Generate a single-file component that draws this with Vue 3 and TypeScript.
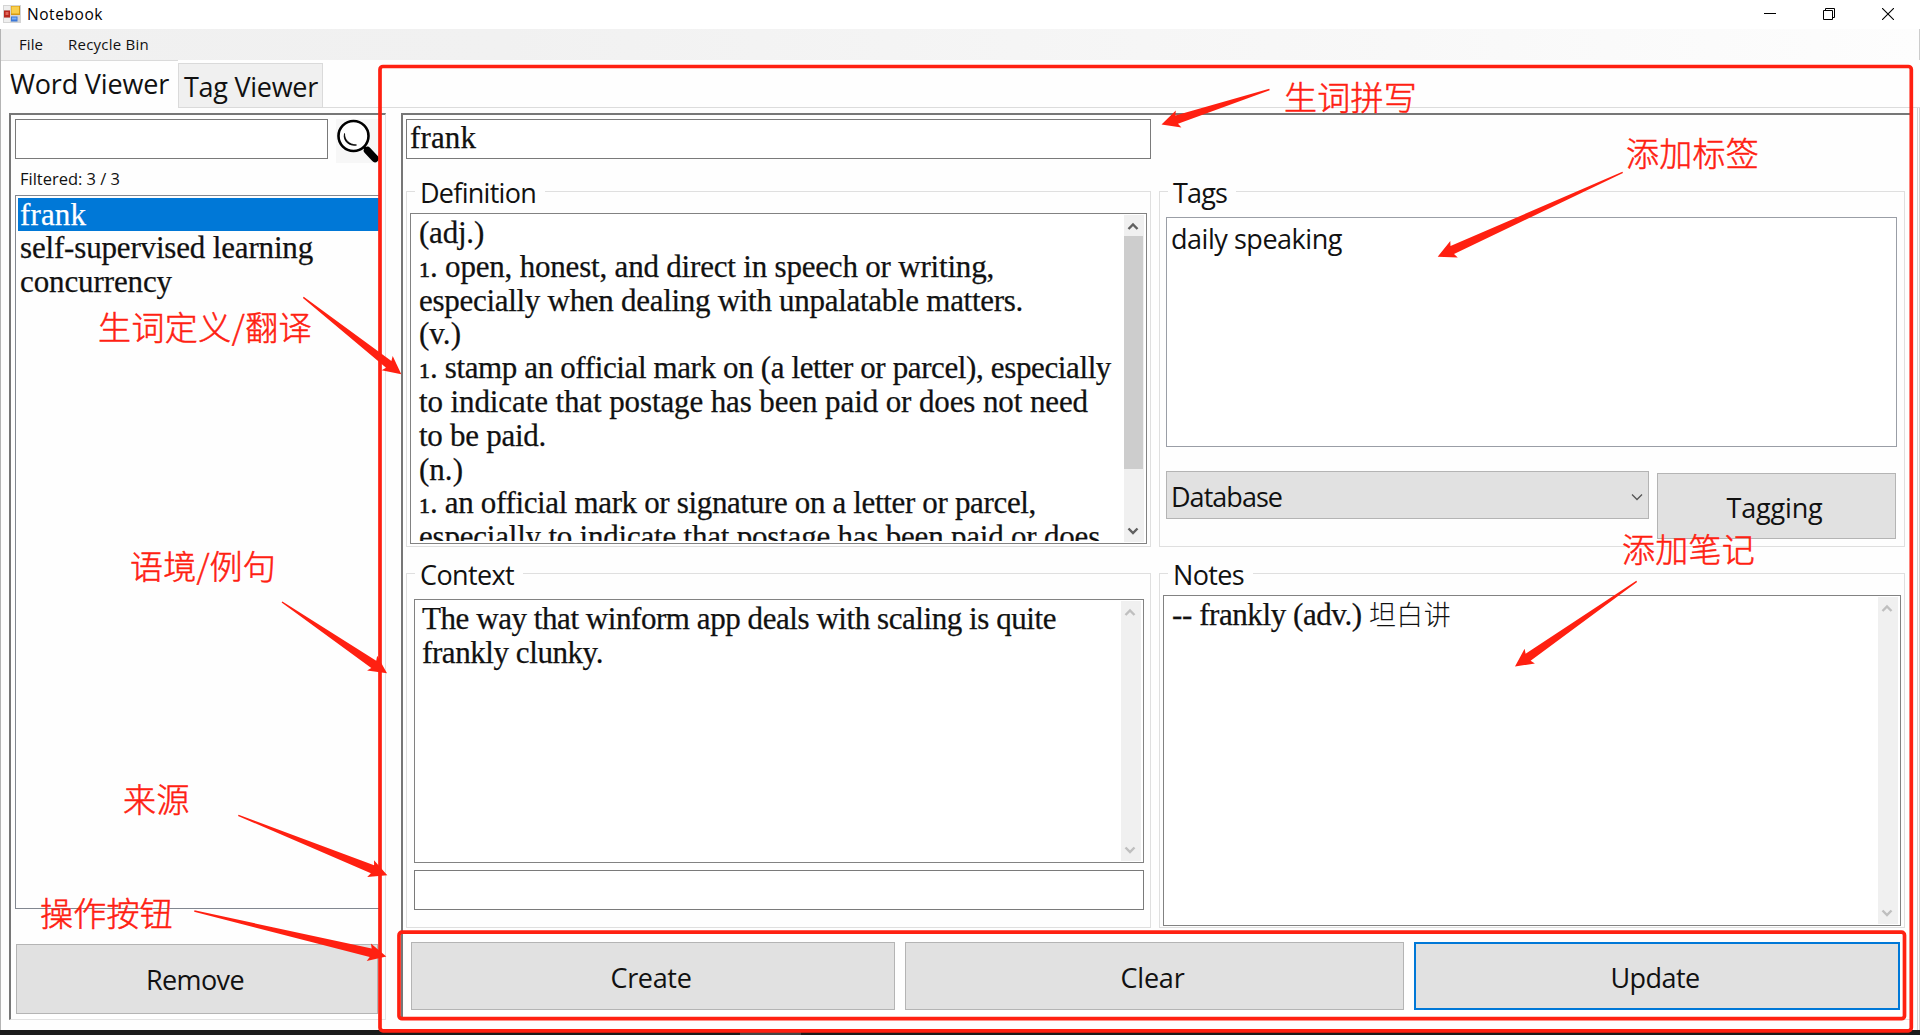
<script setup lang="ts">
import type { Directive } from 'vue'

// Spreads a line of text over a given width by adjusting its tracking.
const vFit: Directive<HTMLElement, number> = {
  mounted(el, { value }) {
    const count = (el.textContent ?? '').length
    const natural = el.getBoundingClientRect().width
    el.style.letterSpacing = `${(value - natural) / count}px`
  },
}

interface Line { text: string; width: number; num?: string }
interface Label { text: string; x: number; y: number; width: number }

const words: Line[] = [
  { text: 'frank', width: 66 },
  { text: 'self-supervised learning', width: 293 },
  { text: 'concurrency', width: 152 },
]

const definition: Line[] = [
  { text: '(adj.)', width: 65 },
  { num: '1', text: '. open, honest, and direct in speech or writing,', width: 564 },
  { text: 'especially when dealing with unpalatable matters.', width: 604 },
  { text: '(v.)', width: 42 },
  { num: '1', text: '. stamp an official mark on (a letter or parcel), especially', width: 681 },
  { text: 'to indicate that postage has been paid or does not need', width: 669 },
  { text: 'to be paid.', width: 127 },
  { text: '(n.)', width: 44 },
  { num: '1', text: '. an official mark or signature on a letter or parcel,', width: 606 },
  { text: 'especially to indicate that postage has been paid or does', width: 681 },
]

const context: Line[] = [
  { text: 'The way that winform app deals with scaling is quite', width: 634 },
  { text: 'frankly clunky.', width: 181 },
]

const labels: Label[] = [
  { text: '生词拼写', x: 1284, y: 80, width: 133 },
  { text: '添加标签', x: 1626, y: 136, width: 133 },
  { text: '生词定义/翻译', x: 98, y: 310, width: 214 },
  { text: '语境/例句', x: 130, y: 549, width: 146 },
  { text: '添加笔记', x: 1622, y: 532, width: 133 },
  { text: '来源', x: 123, y: 782, width: 67 },
  { text: '操作按钮', x: 40, y: 896, width: 133 },
]

// tail x, tail y, tip x, tip y
const arrowEnds: number[][] = [
  [1269.5, 89.5, 1161.5, 124.5],
  [1622.7, 172.3, 1437.7, 256.7],
  [303.3, 297.3, 401.3, 374.3],
  [282, 602, 387, 673.3],
  [1636.7, 581.3, 1515, 666.5],
  [238.3, 815.3, 387.3, 875.3],
  [194.3, 911, 386.3, 956.5],
]

function arrow([tx, ty, hx, hy]: number[]): string {
  const len = Math.hypot(tx - hx, ty - hy)
  const ux = (tx - hx) / len
  const uy = (ty - hy) / len
  const at = (along: number, side: number) =>
    `${(hx + ux * along - uy * side).toFixed(1)},${(hy + uy * along + ux * side).toFixed(1)}`
  return [at(0, 0), at(18, 9), at(16, 4.3), at(len, 0.7), at(len, -0.7), at(16, -4.3), at(18, -9)].join(' ')
}
const arrows = arrowEnds.map(arrow)
</script>

<template>
  <div class="window">
    <header class="titlebar">
      <svg class="app-icon" width="18" height="18" viewBox="0 0 18 18">
        <rect x="0" y="0" width="18" height="18" fill="#d4d4d4" />
        <rect x="1" y="1" width="6" height="4" fill="#eee" />
        <rect x="1" y="13" width="6" height="4" fill="#eee" />
        <rect x="1" y="5.5" width="6" height="7" fill="#b8281e" />
        <rect x="2.5" y="7" width="3" height="3" fill="#e0675b" />
        <rect x="8" y="1" width="9" height="9" fill="#d79a12" />
        <rect x="8.5" y="1.5" width="7.5" height="7" fill="#f9cf4c" />
        <rect x="8" y="11.5" width="6.5" height="5" fill="#3b78d8" />
        <rect x="9" y="12.5" width="4.5" height="2" fill="#7db0f5" />
      </svg>
      <span v-fit="76" class="title">Notebook</span>
      <div class="controls">
        <svg width="12" height="12" viewBox="0 0 12 12"><path d="M0 5.5H12" stroke="#000" /></svg>
        <svg width="12" height="12" viewBox="0 0 12 12" fill="none" stroke="#000">
          <path d="M.5 2.5h9v9h-9zM2.5 2.500V.5h9v9H9.500" />
        </svg>
        <svg width="12" height="12" viewBox="0 0 12 12"><path d="M0 0L12 12M12 0L0 12" stroke="#000" stroke-width="1.1" /></svg>
      </div>
    </header>

    <nav class="menubar">
      <span v-fit="24" class="menu-file">File</span>
      <span v-fit="81">Recycle Bin</span>
    </nav>

    <div class="tabs">
      <div class="tab active"><span v-fit="159">Word Viewer</span></div>
      <div class="tab"><span v-fit="134">Tag Viewer</span></div>
      <div class="tab-rest"></div>
    </div>

    <main class="page">
      <section class="pane words-pane">
        <div class="search">
          <div class="input search-input"></div>
          <svg class="lens" width="43" height="44" viewBox="0 0 43 44">
            <rect width="43" height="44" fill="#f7f7f7" />
            <circle cx="17.500" cy="17" r="15" fill="#fff" stroke="#000" stroke-width="2.600" />
            <path d="M8.500 14.500C8.500 21 13 25.500 20.500 26C14 27.500 6.500 22.500 8.500 14.500Z" fill="#000" stroke="#000" stroke-width=".8" />
            <path d="M27.500 27.500L32 32" stroke="#000" stroke-width="3" />
            <path d="M31.500 31.500L39 39.500" stroke="#000" stroke-width="7.500" stroke-linecap="round" />
          </svg>
        </div>
        <div class="filtered"><span v-fit="100">Filtered: 3 / 3</span></div>
        <div class="listbox">
          <div v-for="(w, i) in words" :key="w.text" class="row" :class="{ selected: i === 0 }">
            <span v-fit="w.width">{{ w.text }}</span>
          </div>
        </div>
        <div class="button remove"><span v-fit="98">Remove</span></div>
      </section>

      <section class="pane detail-pane">
        <div class="input word-input"><span v-fit="66">frank</span></div>

        <div class="groups">
          <fieldset>
            <legend><span v-fit="116">Definition</span></legend>
            <div class="textbox definition">
              <div class="lines">
                <div v-for="l in definition" :key="l.text" class="line">
                  <span v-if="l.num" class="old-num">{{ l.num }}</span><span v-fit="l.width">{{ l.text }}</span>
                </div>
              </div>
              <div class="scrollbar active">
                <svg width="20" height="21" viewBox="0 0 20 21"><path d="M4.500 14L9 9.500L13.500 14" /></svg>
                <div class="thumb"></div>
                <svg width="20" height="21" viewBox="0 0 20 21"><path d="M4.500 7.500L9 12L13.500 7.500" /></svg>
              </div>
            </div>
          </fieldset>

          <fieldset>
            <legend><span v-fit="54">Tags</span></legend>
            <div class="tag-list"><span v-fit="171">daily speaking</span></div>
            <div class="tag-actions">
              <div class="combo">
                <span v-fit="111">Database</span>
                <svg width="12" height="8" viewBox="0 0 12 8"><path d="M1 1.500L6 6.500L11 1.500" fill="none" stroke="#555" stroke-width="1.300" /></svg>
              </div>
              <div class="button tagging"><span v-fit="96">Tagging</span></div>
            </div>
          </fieldset>

          <fieldset>
            <legend><span v-fit="94">Context</span></legend>
            <div class="textbox context">
              <div class="lines">
                <div v-for="l in context" :key="l.text" class="line"><span v-fit="l.width">{{ l.text }}</span></div>
              </div>
              <div class="scrollbar">
                <svg width="20" height="21" viewBox="0 0 20 21"><path d="M4.500 14L9 9.500L13.500 14" /></svg>
                <svg width="20" height="21" viewBox="0 0 20 21"><path d="M4.500 7.500L9 12L13.500 7.500" /></svg>
              </div>
            </div>
            <div class="input source-input"></div>
          </fieldset>

          <fieldset>
            <legend><span v-fit="71">Notes</span></legend>
            <div class="textbox notes">
              <div class="lines">
                <div class="line"><span v-fit="197">-- frankly (adv.) </span><span v-fit="82" class="cjk">坦白讲</span></div>
              </div>
              <div class="scrollbar">
                <svg width="20" height="21" viewBox="0 0 20 21"><path d="M4.500 14L9 9.500L13.500 14" /></svg>
                <svg width="20" height="21" viewBox="0 0 20 21"><path d="M4.500 7.500L9 12L13.500 7.500" /></svg>
              </div>
            </div>
          </fieldset>
        </div>

        <div class="actions">
          <div class="button create"><span v-fit="81">Create</span></div>
          <div class="button clear"><span v-fit="64">Clear</span></div>
          <div class="button update"><span v-fit="89">Update</span></div>
        </div>
      </section>
    </main>

    <footer class="taskbar"><div class="task"></div></footer>

    <svg class="marks" width="1920" height="1035" viewBox="0 0 1920 1035">
      <rect x="380" y="66.500" width="1531.300" height="964.300" rx="3" />
      <rect x="399" y="932.200" width="1505.500" height="86.500" rx="3" />
      <polygon v-for="p in arrows" :key="p" :points="p" />
    </svg>
    <div
      v-for="l in labels"
      :key="l.text"
      class="label"
      :style="{ left: `${l.x}px`, top: `${l.y}px` }"
    ><span v-fit="l.width">{{ l.text }}</span></div>
  </div>
</template>

<style>
body {
  margin: 0;
  background: #fff;
}
</style>

<style scoped>
.window {
  position: relative;
  box-sizing: border-box;
  width: 1920px;
  height: 1035px;
  overflow: hidden;
  display: flex;
  flex-direction: column;
  background: #fefefe;
  color: #111;
  font: 27px/38px 'Open Sans', 'Noto Sans', sans-serif;
}
.window div,
.window header,
.window nav,
.window section,
.window fieldset {
  box-sizing: border-box;
}
span {
  display: inline-block;
  white-space: pre;
}
svg {
  display: block;
  flex: none;
}

.titlebar {
  display: flex;
  height: 29px;
  padding: 5px 26px 0 3px;
  background: #fff;
}
.title {
  margin-left: 6px;
  font-size: 15.500px;
  line-height: 19px;
  color: #000;
}
.controls {
  display: flex;
  gap: 47px;
  margin: 3px 0 0 auto;
}
.menubar {
  display: flex;
  flex: none;
  height: 31px;
  padding: 4px 0 0 18px;
  border-left: 1px solid #b4b4b4;
  border-right: 1px solid #ccc;
  background: linear-gradient(90deg, #f0f0f0 0, #f1f1f1 500px, #f8f8f8 1400px, #fdfdfd);
  font-size: 15px;
  line-height: 22px;
}
.menu-file {
  margin-right: 25px;
}

.tabs {
  display: flex;
  flex: none;
  height: 48px;
  border-left: 1px solid #b4b4b4;
}
.tab {
  width: 145px;
  height: 45px;
  margin-top: 3px;
  padding: 4px 0 0 5px;
  border: 1px solid #dadada;
  background: #f0f0f0;
}
.tab.active {
  width: 177px;
  height: 48px;
  margin-top: 0;
  padding: 4px 0 0 9px;
  border-width: 1px 0 0;
  background: #fefefe;
}
.tab-rest {
  flex: 1;
  border-bottom: 1px solid #dcdcdc;
}

.page {
  display: flex;
  flex: 1;
  box-sizing: border-box;
  min-height: 0;
  padding: 5px 0 0 8px;
  border-left: 1px solid #b4b4b4;
  border-right: 3px double #d2d2d2;
}
.pane {
  height: 907px;
  border: solid;
  border-width: 2px 1px 1px 2px;
  border-color: #777 #e3e3e3 #e3e3e3 #777;
}
.words-pane {
  width: 377px;
  margin-right: 15px;
  padding: 4px 0 0 4px;
}
.detail-pane {
  width: 1509px;
  padding: 4px 0 0 3px;
  border-right: 0;
}

.input {
  height: 40px;
  border: 1px solid #7a7a7a;
  background: #fff;
}
.search {
  display: flex;
  height: 44px;
}
.search-input {
  width: 313px;
  margin-right: 8px;
}
.filtered {
  height: 32px;
  padding: 5px 0 0 5px;
  font-size: 16.500px;
  line-height: 22px;
}
.listbox {
  height: 714px;
  width: 364px;
  padding: 2px 0 0 2px;
  border: solid #828790;
  border-width: 1px 0 1px 1px;
}
.row {
  height: 33.750px;
  padding-left: 2px;
  font: 31px/34px 'Liberation Serif', serif;
  color: #111;
  -webkit-text-stroke: .25px;
}
.row.selected {
  height: 33px;
  color: #fff;
  background: #0078d7;
}

.button {
  display: flex;
  justify-content: center;
  align-items: center;
  border: 1px solid #b4b4b4;
  background: #e1e1e1;
  padding: 3px 4px 0 0;
}
.remove {
  width: 362px;
  height: 70px;
  margin: 35px 0 0 1px;
  padding: 2px 4px 0 0;
}

.word-input {
  width: 745px;
  padding: 1px 0 0 3px;
  font: 31px/34px 'Liberation Serif', serif;
  -webkit-text-stroke: .25px;
}
.groups {
  display: grid;
  grid-template: 375px 374px / 745px 746px;
  gap: 7px 8px;
  margin-top: 13px;
}
fieldset {
  min-width: 0;
  margin: 0;
  padding: 0;
  border: 1px solid #dfdfdf;
}
legend {
  box-sizing: border-box;
  height: 38px;
  margin-left: 8px;
  padding: 2px 9px 0 5px;
}
.textbox {
  display: flex;
  padding: 1px;
  border: 1px solid #828282;
  background: #fff;
}
.definition {
  width: 737px;
  height: 331px;
  margin: 3px 0 0 3px;
}
.context {
  width: 730px;
  height: 264px;
  margin: 7px 0 0 7px;
}
.notes {
  width: 738px;
  height: 331px;
  margin: 3px 0 0 3px;
}
.lines {
  flex: 1;
  overflow: hidden;
  padding: 1px 0 0 7px;
  margin-bottom: 1px;
  font: 31px/33.800px 'Liberation Serif', 'Noto Sans CJK SC', serif;
  white-space: nowrap;
  -webkit-text-stroke: .25px;
}
.context .lines {
  padding-left: 6px;
}
.notes .lines {
  overflow: visible;
  padding-top: 0;
}
.cjk {
  font: 300 27px/33px 'Noto Sans CJK SC', sans-serif;
  -webkit-text-stroke: 0;
}
.line {
  height: 33.800px;
}
.old-num {
  width: 11px;
  font-size: 22px;
  -webkit-text-stroke: .6px;
}
.scrollbar {
  display: flex;
  flex-direction: column;
  justify-content: space-between;
  width: 20px;
  margin-right: 1px;
  background: #f0f0f0;
}
.scrollbar path {
  fill: none;
  stroke: #bfbfbf;
  stroke-width: 2.400;
}
.scrollbar.active path {
  stroke: #606060;
}
.thumb {
  width: 19px;
  height: 233px;
  margin-bottom: auto;
  background: #cdcdcd;
}
.source-input {
  width: 730px;
  margin: 7px 0 0 7px;
}

.tag-list {
  width: 731px;
  height: 230px;
  margin: 7px 0 0 6px;
  padding: 2px 0 0 4px;
  border: 1px solid #9a9ea6;
  background: #fff;
}
.tag-actions {
  display: flex;
  margin: 24px 0 0 6px;
}
.combo {
  display: flex;
  justify-content: space-between;
  align-items: center;
  width: 483px;
  height: 48px;
  padding: 3px 5px 0 4px;
  border: 1px solid #b4b4b4;
  background: #e1e1e1;
}
.tagging {
  width: 239px;
  height: 66px;
  margin: 2px 0 0 8px;
}
.actions {
  display: flex;
  height: 68px;
  margin: 14px 0 0 5px;
}
.create {
  width: 484px;
  margin-right: 10px;
}
.clear {
  width: 499px;
  margin-right: 10px;
}
.update {
  width: 486px;
  border: 2px solid #0078d7;
}

.taskbar {
  flex: none;
  height: 5px;
  padding-left: 740px;
  background: #1b1b1b;
}
.task {
  width: 61px;
  height: 5px;
  background: #444;
}

/* Annotations laid over the window */
.marks {
  position: absolute;
  inset: 0;
}
.marks rect {
  fill: none;
  stroke: #ff2011;
  stroke-width: 3.700;
}
.marks polygon {
  fill: #ff2011;
}
.label {
  position: absolute;
  font: 300 33px/33px 'Noto Sans CJK SC', sans-serif;
  color: #ff2011;
  -webkit-text-stroke: .5px;
}
</style>
